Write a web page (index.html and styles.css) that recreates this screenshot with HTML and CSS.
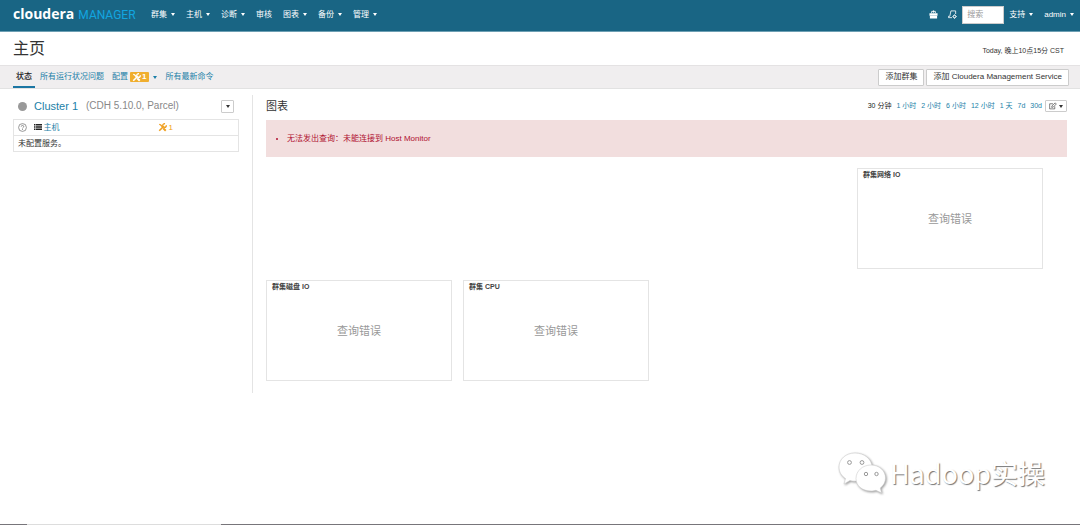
FILE: index.html
```html
<!DOCTYPE html>
<html lang="zh-CN">
<head>
<meta charset="utf-8">
<title>主页 - Cloudera Manager</title>
<link rel="stylesheet" href="styles.css">
</head>
<body>
<svg class="defs" width="0" height="0" aria-hidden="true">
  <symbol id="tools" viewBox="0 0 18 18">
    <path d="M2.500 2.500l3 1.500 3.500 4" fill="none" stroke="currentColor" stroke-width="2.600"/>
    <path d="M10.500 10.500l5 5" stroke="currentColor" stroke-width="4"/>
    <path d="M2.500 15.500l8.500-8.500" stroke="currentColor" stroke-width="3.200"/>
    <path d="M14 1.500a3.600 3.600 0 1 0 2.700 3" fill="none" stroke="currentColor" stroke-width="2.800"/>
  </symbol>
</svg>
<header class="navbar">
  <a class="brand" href="#"><b>cloudera</b><span>MANAGER</span></a>
  <nav class="menu">
    <a href="#" class="caret">群集</a>
    <a href="#" class="caret">主机</a>
    <a href="#" class="caret">诊断</a>
    <a href="#">审核</a>
    <a href="#" class="caret">图表</a>
    <a href="#" class="caret">备份</a>
    <a href="#" class="caret">管理</a>
  </nav>
  <div class="tools">
    <a href="#" class="nav-icon" aria-label="Parcel">
      <svg viewBox="0 0 20 20"><path d="M1 7h18v5.500H1zM2 13.500h16V19H2z" fill="#fff"/><path d="M6 7V3h8v4M10 1v5" fill="none" stroke="#fff" stroke-width="2"/></svg>
    </a>
    <a href="#" class="nav-icon" aria-label="正在运行的命令">
      <svg viewBox="0 0 20 20"><path d="M17 9V2H6.500L4 14H1v3h8" fill="none" stroke="#fff" stroke-width="1.800"/><circle cx="14.500" cy="14.500" r="3" fill="none" stroke="#fff" stroke-width="2.200"/><path d="M14.500 10v2M14.500 17v2.500M10 14.500h2M17 14.500h2.500" stroke="#fff" stroke-width="1.600"/></svg>
    </a>
    <input class="search" type="search" placeholder="搜索" aria-label="搜索">
    <a href="#" class="caret support">支持</a>
    <a href="#" class="caret">admin</a>
  </div>
</header>
<div class="title-row">
  <h1>主页</h1>
  <time>Today, 晚上10点15分 CST</time>
</div>
<div class="tab-bar">
  <nav class="tabs">
    <a href="#" class="active">状态</a>
    <a href="#">所有运行状况问题</a>
    <a href="#" class="caret config">配置<span class="badge"><svg><use href="#tools"/></svg>1</span></a>
    <a href="#">所有最新命令</a>
  </nav>
  <div class="actions">
    <button type="button">添加群集</button>
    <button type="button">添加 Cloudera Management Service</button>
  </div>
</div>
<main class="content">
  <aside class="sidebar">
    <div class="cluster-head">
      <span class="dot"></span>
      <h2><a href="#">Cluster 1</a></h2>
      <span class="version">(CDH 5.10.0, Parcel)</span>
      <button type="button" class="caret drop" aria-label="群集操作"></button>
    </div>
    <table class="services">
      <tr>
        <td class="health"><svg viewBox="0 0 18 18"><circle cx="9" cy="9" r="7.800" fill="none" stroke="#777" stroke-width="1.500"/><path d="M6.500 7.200a2.500 2.300 0 1 1 3.500 2c-.8.400-1 .8-1 1.600M9 12v1.800" fill="none" stroke="#777" stroke-width="1.600"/></svg></td>
        <td class="host"><svg viewBox="0 0 16 14"><path d="M0 1h3v3H0zM0 5.500h3v3H0zM0 10h3v3H0zM4 1h12v3H4zM4 5.500h12v3H4zM4 10h12v3H4z" fill="#222"/></svg><a href="#">主机</a></td>
        <td class="warn"><svg><use href="#tools"/></svg>1</td>
      </tr>
      <tr><td colspan="3" class="none">未配置服务。</td></tr>
    </table>
  </aside>
  <section class="charts">
    <div class="charts-head">
      <h2>图表</h2>
      <nav class="ranges">
        <a href="#" class="current">30 分钟</a>
        <a href="#">1 小时</a>
        <a href="#">2 小时</a>
        <a href="#">6 小时</a>
        <a href="#">12 小时</a>
        <a href="#">1 天</a>
        <a href="#">7d</a>
        <a href="#">30d</a>
      </nav>
      <button type="button" class="caret edit" aria-label="编辑"><svg viewBox="0 0 18 16"><path d="M13 9v5.500H1.500V3H9" fill="none" stroke="#333" stroke-width="1.400"/><path d="M6 11l.8-3.500L14 1l2.500 2.500-7 7z" fill="none" stroke="#333" stroke-width="1.400"/></svg></button>
    </div>
    <ul class="alert"><li>无法发出查询：未能连接到 Host Monitor</li></ul>
    <div class="grid">
      <article class="chart network"><h3>群集网络 IO</h3><p>查询错误</p></article>
      <article class="chart"><h3>群集磁盘 IO</h3><p>查询错误</p></article>
      <article class="chart"><h3>群集 CPU</h3><p>查询错误</p></article>
    </div>
  </section>
</main>
<footer class="taskbar"><span></span></footer>
<div class="watermark">
  <svg viewBox="0 0 48 42">
    <g fill="#fff" stroke="#ccc" stroke-width=".6">
      <path d="M17 1C8 1 1 7 1 15c0 5 2.500 9 6.500 11.500L6 32l6-3.500c2 .6 4 .8 7 .5 8-.5 15-6 15-14S26 1 17 1z"/>
      <path d="M33 13c-8.500 0-15 6-15 13.500S24.500 39 33 39c2 0 3.500-.3 5-.7l5.500 2.700-1.200-5C45.500 33.500 47.500 30 47.500 26 47.500 19 41.500 13 33 13z"/>
    </g>
    <g fill="#fff" stroke="#999" stroke-width="1"><circle cx="11.500" cy="10.500" r="1.900"/><circle cx="24" cy="10.500" r="1.900"/><circle cx="28" cy="22" r="1.700"/><circle cx="38.500" cy="22" r="1.700"/></g>
  </svg>
  <span>Hadoop实操</span>
</div>
</body>
</html>
```

FILE: styles.css
```css
* { box-sizing: border-box; }
body {
  margin: 0;
  min-height: 100vh;
  display: flex;
  flex-direction: column;
  position: relative;
  background: #fff;
  color: #333;
  font: 8px/12px "Liberation Sans", "Noto Sans CJK SC", sans-serif;
}
.defs { position: absolute; }
a { color: #1b7fa8; text-decoration: none; }
h1, h2, h3, p { margin: 0; font-weight: 400; }
button { font: inherit; color: #333; background: #fff; border: 1px solid #ccc; border-radius: 1px; }

.caret { display: inline-flex; align-items: center; gap: 3px; }
.caret::after {
  content: "";
  border: 2px solid transparent;
  border-top: 3px solid currentColor;
  border-bottom: 0;
}

.navbar {
  height: 32px;
  padding: 0 6px 2px 13px;
  display: flex;
  align-items: center;
  background: #196584;
  border-bottom: 1px solid #6d9fb3;
}
.navbar a { color: #fff; }
.navbar .brand { display: flex; align-items: baseline; gap: 4px; width: 138px; line-height: 18px; }
.brand b { font: 700 14px/18px "Open Sans", sans-serif; }
.brand span { font: 400 12px/18px Roboto, sans-serif; color: #12a5e0; }
.menu { display: flex; gap: 11px; }
.tools { margin-left: auto; display: flex; align-items: center; }
.menu .caret, .tools .caret { gap: 4px; }
.nav-icon { display: flex; margin-right: 10px; }
.nav-icon + .search { margin-left: -5px; }
.nav-icon svg { width: 9px; height: 9px; }
.search {
  width: 42px;
  height: 18px;
  margin-right: 5px;
  padding: 0 4px;
  border: 1px solid #ccc;
  font: inherit;
  background: #fff;
}
.search::placeholder { color: #999; }
.support { margin-right: 11px; }

.title-row {
  height: 34px;
  padding: 0 16px 0 13px;
  display: flex;
  align-items: center;
  justify-content: space-between;
  border-bottom: 1px solid #e4e2e3;
}
h1 { font-size: 16px; line-height: 24px; }
time { font-size: 7px; padding-top: 4px; }

.tab-bar {
  height: 23px;
  padding: 0 11px 0 13px;
  display: flex;
  justify-content: space-between;
  align-items: center;
  background: #f0eeef;
  border-bottom: 1px solid #e2e2e2;
}
.tabs { display: flex; align-self: stretch; gap: 8px; }
.tabs a { display: flex; align-items: center; }
.tabs .active {
  color: #222;
  font-weight: 500;
  padding: 2px 3px 0;
  margin-right: -3px;
  border-bottom: 2px solid #1b76a3;
}
.badge {
  display: inline-flex;
  align-items: center;
  gap: 1px;
  height: 10px;
  padding: 0 3px 0 2px;
  border-radius: 1px;
  background: #f0ae2e;
  color: #fff;
  font-weight: 700;
}
.tabs .config { gap: 2px; }
.config::after { margin-left: 2px; }
.badge svg, .warn svg { width: 9px; height: 9px; }
.actions { display: flex; gap: 2px; }
.actions button { height: 17px; padding: 0 6px; line-height: 14px; }

.content { display: grid; grid-template-columns: 240fr 814fr; padding: 6px 13px 0; }
.sidebar { padding-right: 13px; border-right: 1px solid #e4e4e4; min-height: 298px; }
.cluster-head { display: flex; align-items: center; height: 22px; padding: 0 5px; }
.dot { width: 9px; height: 9px; border-radius: 50%; background: #999; margin-right: 7px; }
.cluster-head h2 { font-size: 11px; margin-right: 8px; }
.version { color: #888; font-size: 10px; }
.drop { margin-left: auto; width: 13px; height: 13px; padding: 0; justify-content: center; }
.services { width: 100%; margin-top: 2px; border-collapse: collapse; border: 1px solid #e4e4e4; }
.services td { height: 16px; padding: 0; border: 0 solid #e4e4e4; border-width: 1px 0; }
.services svg { vertical-align: middle; }
.services .health { width: 20px; padding-left: 4px; }
.health svg { width: 9px; height: 9px; display: block; }
.host svg { width: 8px; height: 8px; margin-right: 2px; }
.services .warn { width: 81px; color: #f0a020; }
.warn svg { margin-right: 2px; }
.services .none { padding-left: 4px; }

.charts { padding-left: 13px; min-width: 0; }
.charts-head { display: flex; align-items: center; height: 22px; }
.charts-head h2 { font-size: 11px; margin-right: auto; }
.ranges { display: flex; gap: 5px; font-size: 7px; }
.ranges .current { color: #222; }
.edit { height: 12px; width: 22px; padding: 0 3px; margin-left: 3px; gap: 2px; }
.edit svg { width: 9px; height: 8px; }
.alert {
  margin: 3px 0 11px;
  padding: 13px 21px 12px;
  background: #f2dede;
  color: #b01030;
}
.grid {
  display: grid;
  grid-template-columns: repeat(4, 1fr);
  gap: 11px;
  padding-right: 24px;
}
.chart { height: 101px; padding: 0 5px; border: 1px solid #e4e4e4; }
.network { grid-column: 4; }
.chart h3 { font-size: 7px; font-weight: 700; color: #444; }
.chart p { color: #999; font-size: 11px; line-height: 18px; text-align: center; margin-top: 29px; }

.taskbar { margin-top: auto; height: 1px; background: #77757a; padding-left: 27px; }
.taskbar span { display: block; width: 194px; height: 1px; background: #ddd; }

.watermark {
  position: absolute;
  right: 35px;
  bottom: 31px;
  display: flex;
  align-items: center;
  gap: 4px;
  color: #fff;
  font: 400 27px/40px "Noto Sans CJK SC", sans-serif;
  text-shadow: 1px 1px 1px #777;
}
.watermark svg { width: 48px; height: 42px; filter: drop-shadow(1px 1px 1px #999); }
```
